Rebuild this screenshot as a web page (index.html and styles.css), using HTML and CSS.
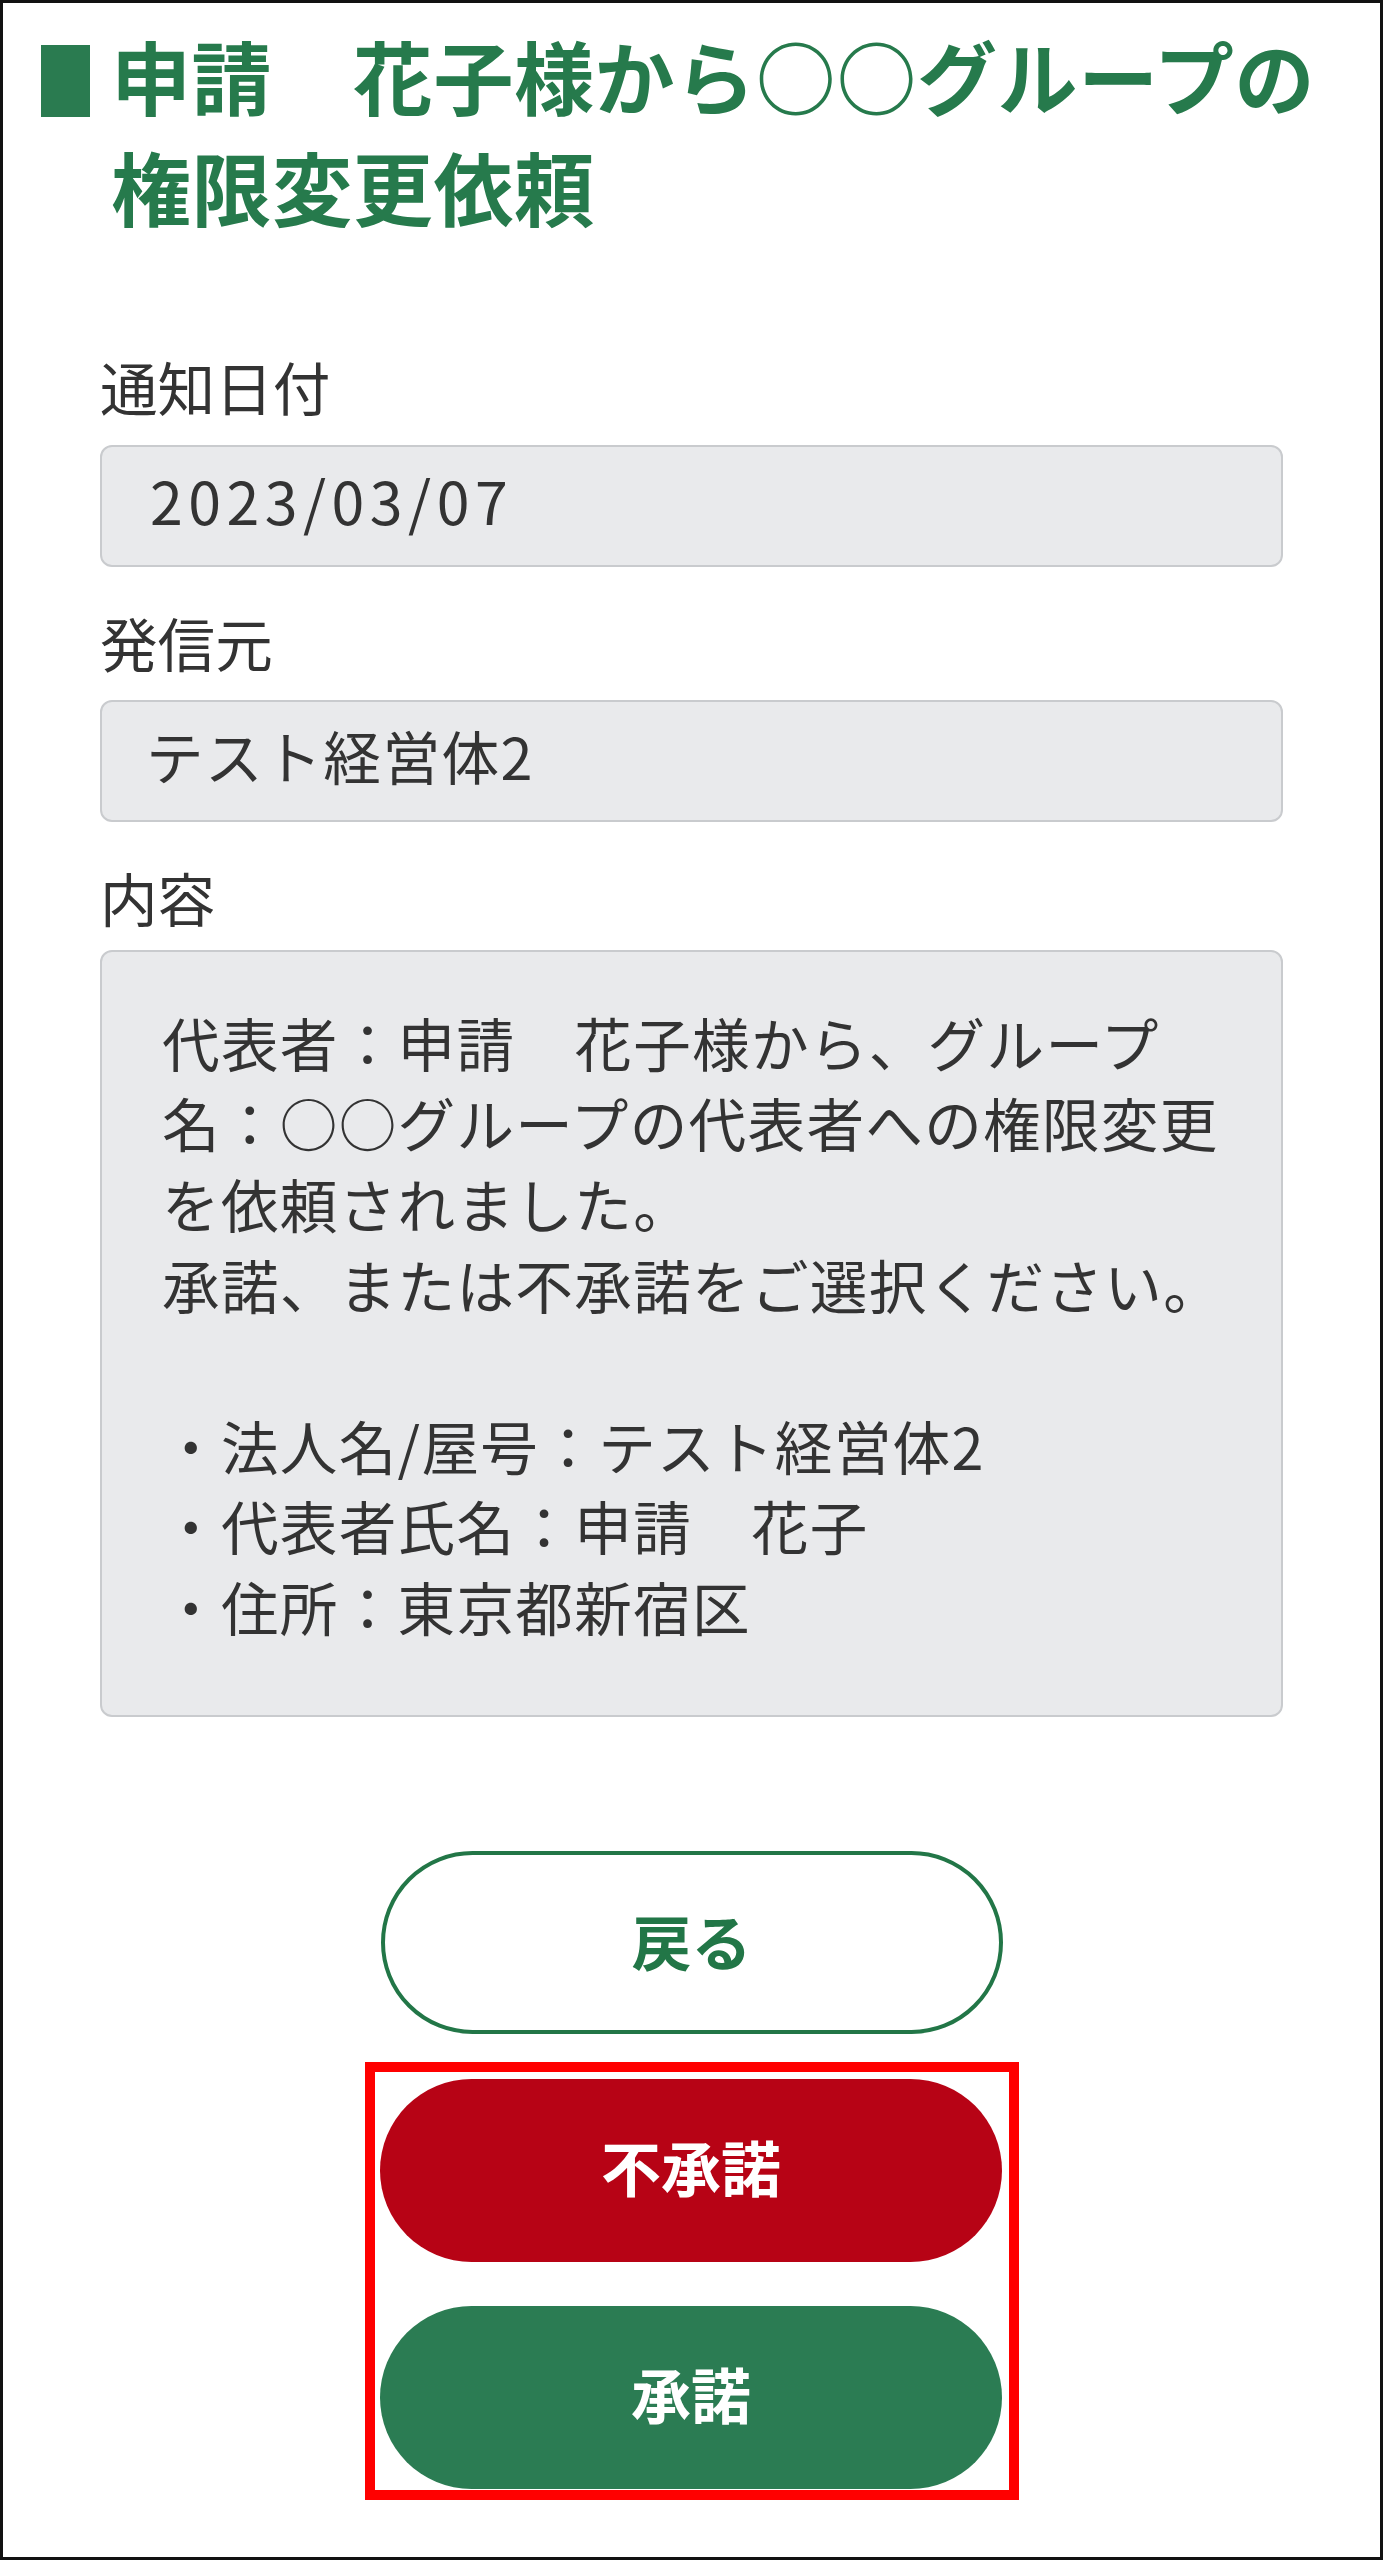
FILE: index.html
```html
<!DOCTYPE html>
<html lang="ja">
<head>
<meta charset="utf-8">
<title>権限変更依頼</title>
<link rel="stylesheet" href="styles.css">
</head>
<body>
<div class="page">
  <h1 class="title">
    <span class="title-mark"></span>
    <span class="title-text">申請　花子様から○○グループの<br>権限変更依頼</span>
  </h1>

  <div class="form">
    <div class="field">
      <div class="label">通知日付</div>
      <div class="box box-single"><span class="date">2023/03/07</span></div>
    </div>
    <div class="field">
      <div class="label">発信元</div>
      <div class="box box-single"><span class="sender">テスト経営体2</span></div>
    </div>
    <div class="field field-content">
      <div class="label">内容</div>
      <div class="box box-multi">代表者：申請　花子様から、グループ<br>名：○○グループの代表者への権限変更<br>を依頼されました。<br>承諾、または不承諾をご選択ください。<br><br>・法人名/屋号：テスト経営体2<br>・代表者氏名：申請　花子<br>・住所：東京都新宿区</div>
    </div>
  </div>

  <div class="actions">
    <button class="btn btn-back" type="button">戻る</button>
    <div class="highlight">
      <button class="btn btn-reject" type="button">不承諾</button>
      <button class="btn btn-accept" type="button">承諾</button>
    </div>
  </div>
</div>
</body>
</html>
```

FILE: styles.css
```css
html, body {
  margin: 0;
  padding: 0;
  background: #ffffff;
}

body {
  font-family: "Noto Sans CJK JP", "Noto Sans", sans-serif;
  color: #333333;
}

.page {
  width: 1383px;
  height: 2560px;
  box-sizing: border-box;
  border: 3px solid #111111;
  background: #ffffff;
  overflow: hidden;
}

.title {
  display: flex;
  align-items: flex-start;
  margin: 16px 0 0 0;
  padding-left: 38px;
  font-size: 80px;
  line-height: 111px;
  font-weight: 700;
  color: #267a4c;
}

.title-mark {
  flex: none;
  width: 49px;
  height: 72px;
  margin-top: 26px;
  margin-right: 21px;
  background: #2a7b50;
}

.title-text {
  white-space: nowrap;
  letter-spacing: 0.6px;
}

.form {
  display: flex;
  flex-direction: column;
  gap: 35px;
  margin: 105px 97px 0 97px;
}

.label {
  font-size: 57.6px;
  line-height: 80.6px;
  color: #333333;
}

.box {
  margin-top: 18px;
  box-sizing: border-box;
  background: #e9eaec;
  border: 2px solid #c9cbce;
  border-radius: 12px;
  font-size: 57.6px;
  line-height: 80.6px;
  color: #333333;
}

.box-single {
  height: 122px;
  padding: 13px 48px 0 48px;
  white-space: nowrap;
}

.date {
  font-size: 59px;
  letter-spacing: 5.5px;
}

.sender {
  letter-spacing: 1.5px;
  margin-left: -4px;
}

.field-content .box {
  margin-top: 12px;
}

.box-multi {
  height: 767px;
  padding: 50px 30px 0 60px;
  white-space: nowrap;
  letter-spacing: 1.3px;
}

.actions {
  display: flex;
  flex-direction: column;
  align-items: center;
  margin-top: 134px;
}

.btn {
  display: flex;
  align-items: center;
  justify-content: center;
  box-sizing: border-box;
  width: 622px;
  height: 183px;
  border-radius: 92px;
  font-family: "Noto Sans CJK JP", "Noto Sans", sans-serif;
  font-size: 60px;
  font-weight: 700;
  padding: 0 0 10px 0;
  cursor: pointer;
}

.btn-back {
  background: #ffffff;
  border: 4px solid #227647;
  color: #227647;
  padding-bottom: 6px;
}

.highlight {
  display: flex;
  flex-direction: column;
  gap: 44px;
  margin-top: 28px;
  margin-left: 1px;
  padding: 7px 7px 1px 5px;
  border: 10px solid #ff0000;
}

.btn-reject {
  border: none;
  background: #b70315;
  color: #ffffff;
}

.btn-accept {
  border: none;
  background: #2b7c53;
  color: #ffffff;
}
```
